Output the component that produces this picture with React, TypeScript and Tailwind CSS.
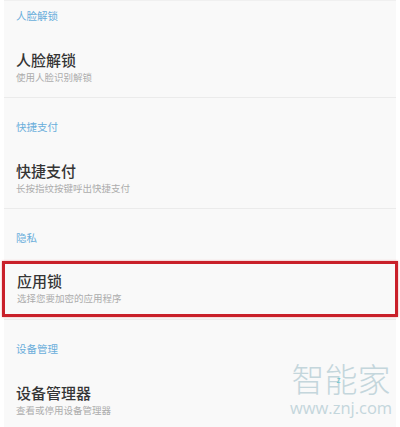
import React from 'react';

const sections = [
    { header: '人脸解锁', title: '人脸解锁', desc: '使用人脸识别解锁' },
    { header: '快捷支付', title: '快捷支付', desc: '长按指纹按键呼出快捷支付' },
    { header: '隐私', title: '应用锁', desc: '选择您要加密的应用程序', marked: true },
    { header: '设备管理', title: '设备管理器', desc: '查看或停用设备管理器' },
];

export default function App() {
    return (
        <div
            className="relative w-[400px] h-[427px] overflow-hidden bg-white"
            style={{ fontFamily: '"Noto Sans CJK SC", "Noto Sans", sans-serif' }}
        >
            <div className="mx-[4px] h-full bg-[#f9f9f9] border-t border-[#f0f0f0]">
                {sections.map((s, i) => (
                    <div key={s.header} className={i === 0 ? '-mt-[14px]' : ''}>
                        <div className="h-[50px] pl-[12px] pt-[21px] text-[10.5px] leading-[16px] text-[#6aaedb]">
                            {s.header}
                        </div>
                        <div
                            className={
                                s.marked
                                    ? 'h-[56px] my-[2px] -mx-[2px] pl-[12px] pt-[6px] border-[3px] border-[#c9202a] shadow-[0_0_2px_#f0a0a0]'
                                    : 'h-[60px] pl-[12px] pt-[12px]'
                            }
                        >
                            <div className="text-[15px] leading-[22px] font-medium text-[#353535]">{s.title}</div>
                            <div className="text-[9.5px] leading-[12px] text-[#acacac]">{s.desc}</div>
                        </div>
                        {i < sections.length - 1 && <div className="h-px bg-[#ebebeb]" />}
                    </div>
                ))}
            </div>

            <div className="absolute left-[290px] top-[360px] flex flex-col items-center text-[#c4d6dc]">
                <div className="relative text-[33px] leading-[36px] font-light">
                    智能家
                    <span className="absolute left-[45px] top-[15px] text-[9px] leading-[10px] text-[#4fc0c8]">z</span>
                </div>
                <div
                    className="text-[16.5px] leading-[18px] mt-[3px]"
                    style={{ fontFamily: '"Open Sans", "Liberation Sans", sans-serif' }}
                >
                    www.znj.com
                </div>
            </div>
        </div>
    );
}
